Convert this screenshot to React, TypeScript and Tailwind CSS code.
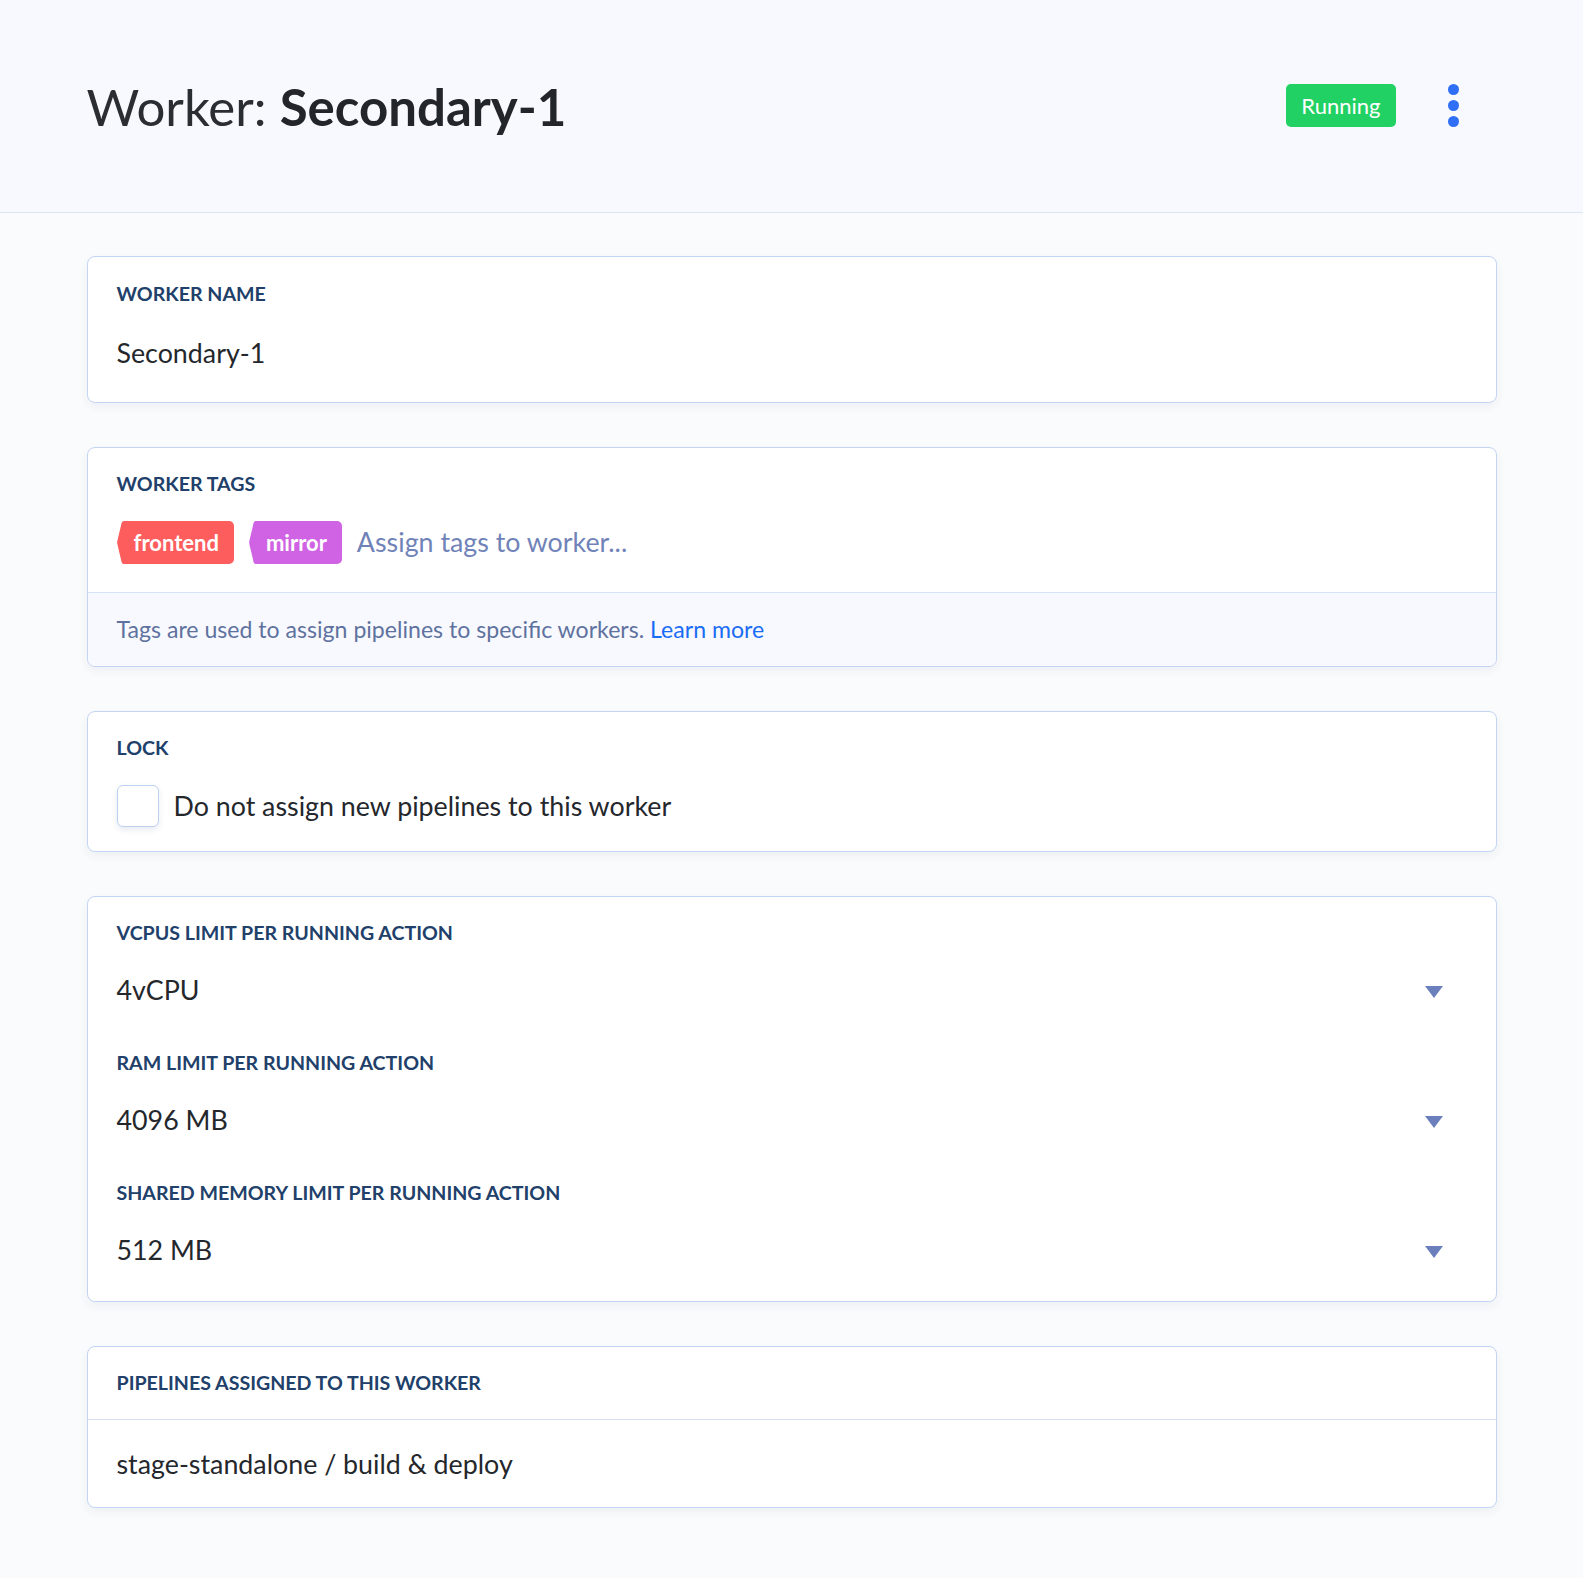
import type { ReactNode } from 'react'

const font = "font-['Lato','Noto_Sans',sans-serif]"

function Card({ children, className = '' }: { children: ReactNode; className?: string }) {
  return (
    <section
      className={`overflow-hidden rounded-lg border border-[#c3d5f3] bg-white shadow-[0_4px_10px_rgba(30,50,110,0.06)] ${className}`}
    >
      {children}
    </section>
  )
}

function Label({ children }: { children: ReactNode }) {
  return (
    <h3 className="text-[19.6px] leading-[24px] font-bold uppercase text-[#21406a]">
      {children}
    </h3>
  )
}

function Caret() {
  return (
    <svg width="18" height="12" viewBox="0 0 18 12" className="mt-[4px]">
      <path d="M0 0 H18 L9 12 Z" fill="#6b7fbc" />
    </svg>
  )
}

function SelectField({ label, value }: { label: string; value: string }) {
  return (
    <div>
      <Label>{label}</Label>
      <div className="mt-[21px] flex h-12 items-center justify-between pr-[24px]">
        <span className="text-[26.8px] text-[#24272c]">{value}</span>
        <Caret />
      </div>
    </div>
  )
}

function Tag({ name, color }: { name: string; color: string }) {
  return (
    <span className="flex h-[43px] items-stretch" style={{ color }}>
      <svg width="10" height="43" viewBox="0 0 10 43" className="shrink-0">
        <path
          d="M10.5 0 H7 Q5.4 0 4.7 1.5 L0.4 19.8 Q0 21.5 0.4 23.2 L4.7 41.5 Q5.4 43 7 43 H10.5 Z"
          fill="currentColor"
        />
      </svg>
      <span
        className="flex items-center rounded-r-[5px] pl-[7px] pr-[15px] text-[22px] font-bold text-white"
        style={{ backgroundColor: color }}
      >
        {name}
      </span>
    </span>
  )
}

export default function App() {
  return (
    <div className={`min-h-screen bg-[#fafbfc] ${font}`}>
      <header className="h-[213px] border-b border-[#dbe5f5] bg-[#f7f9fe]">
        <div className="mx-auto flex h-full w-[1410px] items-center justify-between">
          <h1 className="text-[51px] leading-none text-[#2a2d32]">
            Worker: <span className="font-bold text-[#22252a]">Secondary-1</span>
          </h1>
          <div className="flex items-center pr-[38px] pb-[1px]">
            <span className="flex h-[43px] items-center rounded-[5px] bg-[#22d163] px-[15px] text-[22px] text-white">
              Running
            </span>
            <button
              type="button"
              aria-label="More"
              className="ml-[52px] flex flex-col gap-[5px]"
            >
              <span className="h-[11px] w-[11px] rounded-full bg-[#2f6ff5]" />
              <span className="h-[11px] w-[11px] rounded-full bg-[#2f6ff5]" />
              <span className="h-[11px] w-[11px] rounded-full bg-[#2f6ff5]" />
            </button>
          </div>
        </div>
      </header>

      <main className="mx-auto flex w-[1410px] flex-col gap-[44px] pt-[43px] pb-[70px]">
        <Card className="px-[29px] pt-[25px] pb-[25px]">
          <Label>Worker name</Label>
          <div className="mt-[23px] flex h-12 items-center text-[26.8px] text-[#24272c]">
            Secondary-1
          </div>
        </Card>

        <Card>
          <div className="px-[29px] pt-[24px] pb-[28px]">
            <Label>Worker tags</Label>
            <div className="mt-[25px] flex items-center">
              <Tag name="frontend" color="#fd5d5d" />
              <span className="ml-[15px]">
                <Tag name="mirror" color="#d062e4" />
              </span>
              <span className="ml-[15px] text-[26.8px] text-[#7083b8]">Assign tags to worker...</span>
            </div>
          </div>
          <p className="border-t border-[#d6e2f5] bg-[#f7f9fe] px-[29px] pt-[21px] pb-[22px] text-[23.1px] leading-[30px] text-[#5f729f]">
            Tags are used to assign pipelines to specific workers.{' '}
            <a href="#" className="text-[#1a6cf5]">
              Learn more
            </a>
          </p>
        </Card>

        <Card className="px-[29px] pt-[24px] pb-[24px]">
          <Label>Lock</Label>
          <label className="mt-[25px] flex items-center gap-[15px]">
            <span className="h-[42px] w-[42px] rounded-[6px] border border-[#bcd0f0] bg-white shadow-[0_3px_6px_rgba(30,60,120,0.1)]" />
            <span className="text-[26.8px] text-[#24272c]">Do not assign new pipelines to this worker</span>
          </label>
        </Card>

        <Card className="flex flex-col gap-[37px] px-[29px] pt-[24px] pb-[27px]">
          <SelectField label="vCPUs limit per running action" value="4vCPU" />
          <SelectField label="RAM limit per running action" value="4096 MB" />
          <SelectField label="Shared memory limit per running action" value="512 MB" />
        </Card>

        <Card>
          <div className="border-b border-[#d6e2f5] px-[29px] pt-[24px] pb-[24px]">
            <Label>Pipelines assigned to this worker</Label>
          </div>
          <div className="mt-[20px] mb-[19px] flex h-12 items-center px-[29px] text-[26.8px] text-[#24272c]">
            stage-standalone / build &amp; deploy
          </div>
        </Card>
      </main>
    </div>
  )
}
